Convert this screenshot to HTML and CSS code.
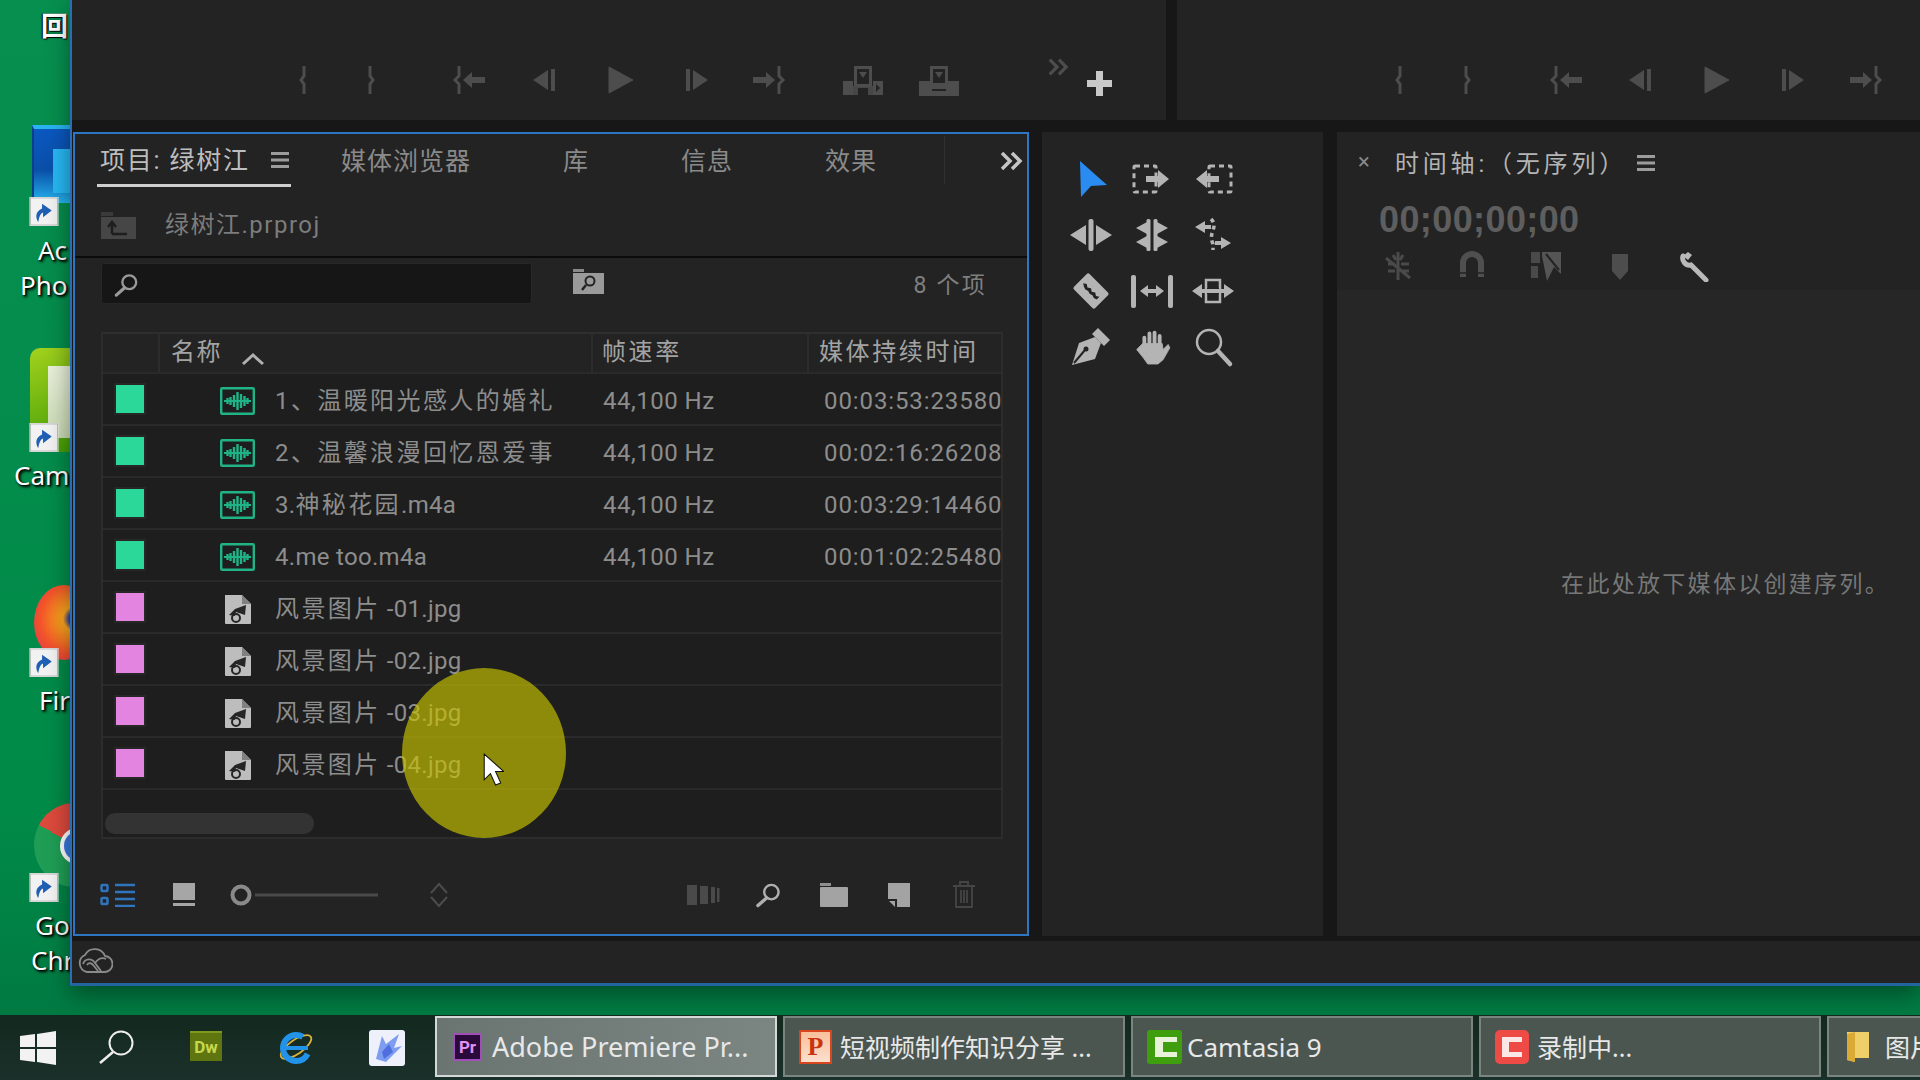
FILE: index.html
```html
<!DOCTYPE html>
<html lang="zh-CN">
<head>
<meta charset="utf-8">
<title>Adobe Premiere Pro</title>
<link rel="stylesheet" href="styles.css">
</head>
<body>
<svg class="defs" aria-hidden="true">
  <symbol id="m-in" viewBox="0 0 40 40"><path d="M21 6V16L18 20L21 24V34" fill="none" stroke="currentColor" stroke-width="3"/></symbol>
  <symbol id="m-out" viewBox="0 0 40 40"><path d="M19 6V16L22 20L19 24V34" fill="none" stroke="currentColor" stroke-width="3"/></symbol>
  <symbol id="m-goin" viewBox="0 0 40 40"><path d="M9 6V16L5 20L9 24V34" fill="none" stroke="currentColor" stroke-width="3"/><path d="M13 20l9-8v5h13v6H22v5z" fill="currentColor"/></symbol>
  <symbol id="m-goout" viewBox="0 0 40 40"><path d="M31 6V16L35 20L31 24V34" fill="none" stroke="currentColor" stroke-width="3"/><path d="M27 20l-9-8v5H5v6h13v5z" fill="currentColor"/></symbol>
  <symbol id="m-back" viewBox="0 0 40 40"><path d="M7 20L22 10V30Z" fill="currentColor"/><rect x="25" y="9" width="4" height="22" fill="currentColor"/></symbol>
  <symbol id="m-fwd" viewBox="0 0 40 40"><path d="M33 20L18 10V30Z" fill="currentColor"/><rect x="11" y="9" width="4" height="22" fill="currentColor"/></symbol>
  <symbol id="m-play" viewBox="0 0 40 40"><path d="M9 7L33 20L9 33Z" fill="currentColor" stroke="currentColor" stroke-width="1" stroke-linejoin="round"/></symbol>
  <symbol id="m-lift" viewBox="0 0 40 40"><path d="M0 21H10V35H0ZM30 21H40V35H30Z" fill="currentColor"/><path d="M10 26h20v9H25V28H15v7H10z" fill="currentColor" opacity=".85"/><rect x="12.500" y="7.500" width="15" height="18" fill="none" stroke="currentColor" stroke-width="3"/><path d="M16 12h8l-4 6z" fill="currentColor"/><path d="M33 24l4 4-4 4z" fill="#232323"/></symbol>
  <symbol id="m-extract" viewBox="0 0 40 40"><path d="M0 21H12V25H28V21H40V36H0Z" fill="currentColor"/><rect x="13" y="29" width="14" height="2" fill="#232323"/><rect x="12.500" y="7.500" width="15" height="17" fill="none" stroke="currentColor" stroke-width="3"/><path d="M16 12h8l-4 6z" fill="currentColor"/></symbol>
  <symbol id="menu" viewBox="0 0 18 18"><path d="M0 2.500H18M0 9H18M0 15.500H18" stroke="currentColor" stroke-width="3"/></symbol>
  <symbol id="chev" viewBox="0 0 24 24"><path d="M3 4l8 8-8 8M13 4l8 8-8 8" fill="none" stroke="currentColor" stroke-width="3.500"/></symbol>
  <symbol id="lens" viewBox="0 0 26 26"><circle cx="16" cy="10" r="7.500" fill="none" stroke="currentColor" stroke-width="2.500"/><path d="M11 16L2 24" stroke="currentColor" stroke-width="3.500" stroke-linecap="round"/></symbol>
  <symbol id="wave" viewBox="0 0 35 28"><rect x="1.200" y="1.200" width="32.600" height="25.600" rx="1" fill="none" stroke="currentColor" stroke-width="2.400"/><path d="M4 14H31" stroke="currentColor" stroke-width="2"/><path d="M7.500 11v6M10.500 10v8M14 8v12M17.500 5v18M21 7v14M24.500 9v10M27.500 11v6" stroke="currentColor" stroke-width="2.400"/></symbol>
  <symbol id="pic" viewBox="0 0 28 32"><path d="M1 2H18L27 11V30a1 1 0 0 1-1 1H2a1 1 0 0 1-1-1z" fill="#bdbdbd"/><path d="M18 2v9h9" fill="#808080"/><path d="M22 12L11 16 5 22l6 1 1-4 9 3z" fill="#262626"/><circle cx="12" cy="25" r="4" fill="none" stroke="#262626" stroke-width="2"/></symbol>
  <symbol id="t-fwd" viewBox="0 0 48 48"><rect x="6" y="11" width="22" height="26" rx="1" fill="none" stroke="currentColor" stroke-width="3" stroke-dasharray="5 4"/><path d="M18 21h12v-6l11 9-11 9v-6H18z" fill="currentColor"/></symbol>
  <symbol id="t-back" viewBox="0 0 48 48"><rect x="20" y="11" width="22" height="26" rx="1" fill="none" stroke="currentColor" stroke-width="3" stroke-dasharray="5 4"/><path d="M30 21H18v-6L7 24l11 9v-6h12z" fill="currentColor"/></symbol>
  <symbol id="t-ripple" viewBox="0 0 48 48"><path d="M3 24l16-10v20zM45 24L29 14v20z" fill="currentColor"/><rect x="21.500" y="8" width="5" height="32" rx="2" fill="currentColor"/></symbol>
  <symbol id="t-roll" viewBox="0 0 48 48"><path d="M8 17l11-6v12zM40 17l-11-6v12zM8 31l11-6v12zM40 31l-11-6v12z" fill="currentColor"/><rect x="18.500" y="8" width="4" height="32" rx="1.500" fill="currentColor"/><rect x="25.500" y="8" width="4" height="32" rx="1.500" fill="currentColor"/></symbol>
  <symbol id="t-rate" viewBox="0 0 48 48"><path d="M6 16l10-6v4h6v4h-6v4zM42 32l-10-6v4h-6v4h6v4z" fill="currentColor"/><path d="M22 8c3 3 4 6 2 11s-2 10 0 14v6" fill="none" stroke="currentColor" stroke-width="3.500" stroke-dasharray="4 3.500"/></symbol>
  <symbol id="t-razor" viewBox="0 0 48 48"><g transform="rotate(45 24 24)"><rect x="9" y="13" width="30" height="22" rx="2" fill="currentColor"/><path d="M13 24l3-2 3 2 3-2 3 2 3-2 3 2 3-2 0 4-3 1-3-1-3 1-3-1-3 1-3-1z" fill="#232323"/></g></symbol>
  <symbol id="t-slip" viewBox="0 0 48 48"><rect x="3" y="8" width="5" height="33" rx="2" fill="currentColor"/><rect x="40" y="8" width="5" height="33" rx="2" fill="currentColor"/><path d="M12 24l8-6v4h8v-4l8 6-8 6v-4h-8v4z" fill="currentColor"/></symbol>
  <symbol id="t-slide" viewBox="0 0 48 48"><path d="M3 24l10-7v5h22v-5l10 7-10 7v-5H13v5z" fill="currentColor"/><rect x="17" y="13" width="14" height="22" fill="none" stroke="currentColor" stroke-width="2.500"/><rect x="18" y="21" width="12" height="6" fill="#232323"/><rect x="17" y="22" width="14" height="4" fill="currentColor"/></symbol>
  <symbol id="t-pen" viewBox="0 0 48 48"><path d="M5 42L12 20 28 14 34 20 28 36z" fill="currentColor"/><path d="M31 5l12 12-6 6-12-12z" fill="currentColor"/><path d="M7 40L18 27" stroke="#232323" stroke-width="2"/><circle cx="19" cy="26" r="2.500" fill="#232323"/></symbol>
  <symbol id="t-hand" viewBox="0 0 48 48"><g transform="translate(3.600 3.600) scale(.85)"><path d="M15 22V13M21 20V8M27 20V7M33 22V11" stroke="currentColor" stroke-width="4.500" stroke-linecap="round"/><path d="M13 20H36L37 27 43 21 45 25 37 39 31 44H19L14 37 6 27 9 24z" fill="currentColor" stroke="currentColor" stroke-linejoin="round"/></g></symbol>
  <symbol id="t-zoom" viewBox="0 0 48 48"><circle cx="20" cy="19" r="12" fill="none" stroke="currentColor" stroke-width="2.500"/><path d="M29 28L41 41" stroke="currentColor" stroke-width="4.500" stroke-linecap="round"/></symbol>
  <symbol id="shortcut" viewBox="0 0 30 30"><rect width="30" height="30" fill="#f2f2f2"/><rect x="1" y="1" width="28" height="28" fill="none" stroke="#bbb"/><path d="M9 26c-3-5-3-11 4-14V7l10 7-9 7v-5c-3 1-4 5-5 10z" fill="#1f5fb4"/></symbol>
</svg>

<main class="desktop">
  <div class="desk-sel">回</div>

  <div class="desk-icon app-ps"><span class="ps-letter"></span></div>
  <svg class="shortcut sc-1"><use href="#shortcut"/></svg>
  <div class="desk-label lab-ac">Ac</div>
  <div class="desk-label lab-pho">Pho</div>

  <div class="desk-icon app-cam"><span class="cam-bar"></span></div>
  <svg class="shortcut sc-2"><use href="#shortcut"/></svg>
  <div class="desk-label lab-cam">Cam</div>

  <div class="desk-icon app-fx"></div>
  <svg class="shortcut sc-3"><use href="#shortcut"/></svg>
  <div class="desk-label lab-fir">Fir</div>

  <div class="desk-icon app-ch"><span class="ch-core"></span></div>
  <svg class="shortcut sc-4"><use href="#shortcut"/></svg>
  <div class="desk-label lab-go">Go</div>
  <div class="desk-label lab-chr">Chr</div>

  <section class="window">
    <div class="monitors">
      <div class="monitor mon-a">
        <svg class="mi"><use href="#m-in"/></svg>
        <svg class="mi"><use href="#m-out"/></svg>
        <svg class="mi"><use href="#m-goin"/></svg>
        <svg class="mi"><use href="#m-back"/></svg>
        <svg class="mi"><use href="#m-play"/></svg>
        <svg class="mi"><use href="#m-fwd"/></svg>
        <svg class="mi"><use href="#m-goout"/></svg>
        <svg class="mi"><use href="#m-lift"/></svg>
        <svg class="mi"><use href="#m-extract"/></svg>
        <svg class="more"><use href="#chev"/></svg>
        <span class="plus"></span>
      </div>
      <div class="monitor mon-b">
        <svg class="mi"><use href="#m-in"/></svg>
        <svg class="mi"><use href="#m-out"/></svg>
        <svg class="mi"><use href="#m-goin"/></svg>
        <svg class="mi"><use href="#m-back"/></svg>
        <svg class="mi"><use href="#m-play"/></svg>
        <svg class="mi"><use href="#m-fwd"/></svg>
        <svg class="mi"><use href="#m-goout"/></svg>
      </div>
    </div>

    <div class="workspace">
      <section class="project">
        <header class="tabs">
          <div class="tab tab-on"><span>项目: 绿树江</span><svg class="menu"><use href="#menu"/></svg></div>
          <div class="tab">媒体浏览器</div>
          <div class="tab">库</div>
          <div class="tab">信息</div>
          <div class="tab">效果</div>
          <div class="tab-div"></div>
          <svg class="tab-more"><use href="#chev"/></svg>
        </header>
        <div class="crumb">
          <svg class="up" viewBox="0 0 35 27"><path d="M0 0H12V4H0Z" fill="#3a3a3a"/><rect y="5" width="35" height="22" fill="#464646"/><path d="M11 22H26M11 22V12M7 15l4-5 4 5" fill="none" stroke="#1e1e1e" stroke-width="2.500"/></svg>
          <span>绿树江.prproj</span>
        </div>
        <div class="searchrow">
          <div class="search"><svg class="lens"><use href="#lens"/></svg></div>
          <svg class="binsearch" viewBox="0 0 31 25"><path d="M0 0H11V3H0Z" fill="#8a8a8a"/><rect y="4" width="31" height="21" fill="#9a9a9a"/><circle cx="17" cy="12" r="4.500" fill="none" stroke="#232323" stroke-width="2"/><path d="M13 16l-4 5" stroke="#232323" stroke-width="2.500"/></svg>
          <div class="count">8 个项</div>
        </div>
        <div class="table">
          <div class="row head">
            <div></div>
            <div class="c-name"><span>名称</span><svg class="sort" viewBox="0 0 24 14"><path d="M2 12L12 3 22 12" fill="none" stroke="#b0b0b0" stroke-width="3"/></svg></div>
            <div class="c-rate">帧速率</div>
            <div class="c-time">媒体持续时间</div>
          </div>
          <div class="row"><div><span class="sw sw-a"></span></div><div class="c-name"><svg class="wave"><use href="#wave"/></svg><span class="nm"><span class="zh">1、温暖阳光感人的婚礼</span></span></div><div class="c-rate">44,100 Hz</div><div class="c-time">00:03:53:23580</div></div>
          <div class="row"><div><span class="sw sw-a"></span></div><div class="c-name"><svg class="wave"><use href="#wave"/></svg><span class="nm"><span class="zh">2、温馨浪漫回忆恩爱事</span></span></div><div class="c-rate">44,100 Hz</div><div class="c-time">00:02:16:26208</div></div>
          <div class="row"><div><span class="sw sw-a"></span></div><div class="c-name"><svg class="wave"><use href="#wave"/></svg><span class="nm">3.<span class="zh">神秘花园</span>.m4a</span></div><div class="c-rate">44,100 Hz</div><div class="c-time">00:03:29:14460</div></div>
          <div class="row"><div><span class="sw sw-a"></span></div><div class="c-name"><svg class="wave"><use href="#wave"/></svg><span class="nm">4.me too.m4a</span></div><div class="c-rate">44,100 Hz</div><div class="c-time">00:01:02:25480</div></div>
          <div class="row"><div><span class="sw sw-b"></span></div><div class="c-name"><svg class="pic"><use href="#pic"/></svg><span class="nm"><span class="zh">风景图片</span> -01.jpg</span></div><div></div><div></div></div>
          <div class="row"><div><span class="sw sw-b"></span></div><div class="c-name"><svg class="pic"><use href="#pic"/></svg><span class="nm"><span class="zh">风景图片</span> -02.jpg</span></div><div></div><div></div></div>
          <div class="row"><div><span class="sw sw-b"></span></div><div class="c-name"><svg class="pic"><use href="#pic"/></svg><span class="nm"><span class="zh">风景图片</span> -03.jpg</span></div><div></div><div></div></div>
          <div class="row"><div><span class="sw sw-b"></span></div><div class="c-name"><svg class="pic"><use href="#pic"/></svg><span class="nm"><span class="zh">风景图片</span> -04.jpg</span></div><div></div><div></div></div>
          <div class="scroll"><span class="thumb"></span></div>
        </div>
        <footer class="foot">
          <svg class="f-list" viewBox="0 0 35 24"><g fill="none" stroke="#2f74bd" stroke-width="2.500"><rect x="1.500" y="2" width="6" height="6" rx="1"/><rect x="1.500" y="15" width="6" height="6" rx="1"/><path d="M15 2H35M15 9H35M15 16H35M15 23H35"/></g></svg>
          <svg class="f-free" viewBox="0 0 22 24"><rect width="22" height="17" fill="#a6a6a6"/><rect y="20" width="22" height="3" fill="#a6a6a6"/></svg>
          <svg class="f-slider" viewBox="0 0 148 24"><circle cx="11" cy="12" r="8.500" fill="none" stroke="#8a8a8a" stroke-width="4"/><rect x="25" y="10.500" width="123" height="3" fill="#4a4a4a"/></svg>
          <svg class="f-sort" viewBox="0 0 18 26"><path d="M1 11L9 2 17 11M1 15L9 24 17 15" fill="none" stroke="#4c4c4c" stroke-width="2"/></svg>
          <svg class="f-bars" viewBox="0 0 33 22"><rect y="1" width="10" height="20" fill="#4a4a4a"/><rect x="13" y="2" width="8" height="18" fill="#4a4a4a"/><rect x="24" y="3" width="4" height="16" fill="#4a4a4a"/><rect x="30" y="4" width="2.500" height="14" fill="#4a4a4a"/></svg>
          <svg class="f-lens"><use href="#lens"/></svg>
          <svg class="f-folder" viewBox="0 0 28 24"><path d="M0 0H11V3H0Z" fill="#8e8e8e"/><rect y="4" width="28" height="20" rx="1" fill="#a3a3a3"/></svg>
          <svg class="f-new" viewBox="0 0 22 24"><path d="M0 0H22V24H9V16H0Z" fill="#a3a3a3"/><path d="M1 18H7V24Z" fill="#a3a3a3"/></svg>
          <svg class="f-trash" viewBox="0 0 22 27"><g fill="none" stroke="#454545" stroke-width="1.800"><path d="M0 5H22M7 5V1H15V5M3 5V26H19V5M8 9V22M11 9V22M14 9V22"/></g></svg>
        </footer>
      </section>

      <aside class="tools">
        <svg class="tool" viewBox="0 0 48 48"><path d="M13 6L40 30 24 31 14 42Z" fill="#2a8cf0"/></svg>
        <svg class="tool"><use href="#t-fwd"/></svg>
        <svg class="tool"><use href="#t-back"/></svg>
        <svg class="tool"><use href="#t-ripple"/></svg>
        <svg class="tool"><use href="#t-roll"/></svg>
        <svg class="tool"><use href="#t-rate"/></svg>
        <svg class="tool"><use href="#t-razor"/></svg>
        <svg class="tool"><use href="#t-slip"/></svg>
        <svg class="tool"><use href="#t-slide"/></svg>
        <svg class="tool"><use href="#t-pen"/></svg>
        <svg class="tool"><use href="#t-hand"/></svg>
        <svg class="tool"><use href="#t-zoom"/></svg>
      </aside>

      <section class="timeline">
        <div class="tl-head">
          <div class="tl-title"><span class="tl-x">×</span><span class="tl-name">时间轴:（无序列）</span><svg class="menu"><use href="#menu"/></svg></div>
          <div class="tc">00;00;00;00</div>
          <div class="tl-icons">
            <svg class="ti" viewBox="0 0 32 32"><path d="M16 2v28M4 8l24 20M6 14h7M19 14h8M6 21h7M19 21h8M11 5l3 5M21 5l-3 5" stroke="#4a4a4a" stroke-width="3" fill="none"/></svg>
            <svg class="ti" viewBox="0 0 32 32"><path d="M7 27V13a9 9 0 0 1 18 0v14" fill="none" stroke="#4f4f4f" stroke-width="6"/><path d="M4 23h6M22 23h6" stroke="#232323" stroke-width="1.500"/></svg>
            <svg class="ti" viewBox="0 0 32 32"><path d="M1 2H10V13H1ZM1 16H8V28H1Z" fill="#4a4a4a"/><path d="M12 2H31V24L24 17 17 31 12 6Z" fill="#555"/><path d="M16 4L29 20" stroke="#232323" stroke-width="2"/></svg>
            <svg class="ti" viewBox="0 0 32 32"><path d="M8 4H24V21L16 30 8 21Z" fill="#4d4d4d"/></svg>
            <svg class="ti" viewBox="0 0 32 32"><path d="M5 6a7 7 0 0 0 8 9L28 30" fill="none" stroke="#b9b9b9" stroke-width="5" stroke-linecap="round"/><path d="M5 6l5-4 4 3-4 5z" fill="#b9b9b9"/></svg>
          </div>
        </div>
        <div class="tl-body">在此处放下媒体以创建序列。</div>
      </section>
    </div>

    <div class="status">
      <svg class="cc" viewBox="0 0 36 28"><g fill="none" stroke="#8a8a8a" stroke-width="1.800"><path d="M10 26a9 9 0 0 1-2-17 11 11 0 0 1 20 1 8 8 0 0 1-1 16z"/><path d="M6 18c2-6 9-6 12-1l6 8"/><path d="M10 19c2-3 5-2 7 1l4 5M29 13c-4-2-8 0-11 4"/></g></svg>
    </div>

    <div class="spot"></div>
    <svg class="cursor" viewBox="0 0 20 32"><path d="M1 1V26L7 20 12 31 17 29 12 18H20Z" fill="#fff" stroke="#111" stroke-width="1"/></svg>
  </section>
</main>

<nav class="taskbar">
  <svg class="tb-win" viewBox="0 0 36 34"><path d="M0 5L15 3V16H0ZM17 3L36 0V16H17ZM0 18H15V31L0 29ZM17 18H36V34L17 31Z" fill="#f2f2f2"/></svg>
  <svg class="tb-search" viewBox="0 0 37 34"><circle cx="23" cy="13" r="11.500" fill="none" stroke="#eee" stroke-width="2"/><path d="M15 22L2 33" stroke="#eee" stroke-width="2.500"/></svg>
  <div class="tb-dw">Dw</div>
  <svg class="tb-ie" viewBox="0 0 36 34"><ellipse cx="18" cy="17" rx="18" ry="7" transform="rotate(-35 18 17)" fill="none" stroke="#d8b340" stroke-width="1.800"/><circle cx="18" cy="18" r="13" fill="none" stroke="#2293e8" stroke-width="6" stroke-dasharray="62 20" stroke-dashoffset="-6"/><rect x="8" y="16" width="22" height="4" fill="#2293e8"/></svg>
  <div class="tb-app"><svg viewBox="0 0 36 36"><path d="M7 29L13 6 17 14 30 4 25 18 33 16 17 32Z" fill="#7e9cf0"/><path d="M13 22L20 14 24 22 15 29Z" fill="#4f6fe0"/></svg></div>
  <div class="task task-on">
    <span class="ti-pr">Pr</span><span class="task-text">Adobe Premiere Pr...</span>
  </div>
  <div class="task">
    <span class="ti-ppt">P</span><span class="task-text task-zh">短视频制作知识分享 ...</span>
  </div>
  <div class="task task-cam">
    <span class="ti-cam"></span><span class="task-text task-lat">Camtasia 9</span>
  </div>
  <div class="task">
    <span class="ti-rec"></span><span class="task-text task-zh">录制中...</span>
  </div>
  <div class="task">
    <svg class="ti-folder" viewBox="0 0 22 30"><path d="M0 0H22V26H8V30L0 28Z" fill="#f0cf6a"/><path d="M0 2L8 0V30L0 28Z" fill="#d9ab35"/></svg><span class="task-text task-zh">图片</span>
  </div>
</nav>
</body>
</html>
```

FILE: styles.css
```css
* { box-sizing: border-box; }
html, body { margin: 0; height: 100%; overflow: hidden; }
body {
  width: 1920px; height: 1080px;
  display: flex; flex-direction: column;
  font-family: Roboto, "Noto Sans CJK SC", sans-serif;
  background: #0a8a4c;
}
svg { display: block; flex: none; }
.defs { position: absolute; width: 0; height: 0; }

/* desktop */
.desktop {
  position: relative; flex: 0 0 1015px; overflow: hidden;
  background: linear-gradient(180deg, #078f4f 0, #008a48 80%, #007a42 100%);
}
.desk-sel {
  position: absolute; left: 41px; top: 9px;
  color: #fff; font: 700 27px/32px "Noto Sans CJK SC", sans-serif;
  text-shadow: 1px 1px 1px #000, -1px 0 1px #000;
}
.desk-label {
  position: absolute; color: #fff; white-space: nowrap;
  font: 26px/32px "Noto Sans", sans-serif;
  text-shadow: 1px 1px 2px #000, 2px 2px 3px #000;
}
.lab-ac { left: 38px; top: 234px; }
.lab-pho { left: 20px; top: 269px; }
.lab-cam { left: 14px; top: 459px; }
.lab-fir { left: 39px; top: 684px; }
.lab-go { left: 35px; top: 909px; }
.lab-chr { left: 31px; top: 944px; }
.desk-icon { position: absolute; overflow: hidden; }
.app-ps {
  left: 32px; top: 125px; width: 50px; height: 78px;
  background: linear-gradient(180deg, #0a58c0, #0a4fa8 55%, #25b5ee 100%);
  border-top: 4px solid #29b4f0; border-left: 2px solid #0a3f8c;
}
.ps-letter { position: absolute; left: 19px; top: 20px; width: 30px; height: 44px; background: #27b7f3; }
.app-cam {
  left: 30px; top: 348px; width: 50px; height: 104px; border-radius: 10px 0 0 10px;
  background: linear-gradient(160deg, #a3d21e, #3f9a05);
}
.cam-bar { position: absolute; left: 18px; top: 18px; width: 30px; height: 72px; background: linear-gradient(180deg, #e9f0da, #c8d9b2); }
.app-fx {
  left: 34px; top: 585px; width: 60px; height: 75px; border-radius: 50%;
  background: radial-gradient(circle at 70% 45%, #3a3f9c 0 12%, #f9a61a 22%, #f2552a 60%, #e0245e 100%);
}
.app-ch {
  left: 34px; top: 803px; width: 80px; height: 84px; border-radius: 50%;
  background: conic-gradient(from 300deg, #dc4a3c 0 120deg, #f6c842 120deg 180deg, #1f9d55 180deg 360deg);
}
.ch-core { position: absolute; left: 26px; top: 25px; width: 34px; height: 36px; border-radius: 50%; background: #3a78e0; border: 4px solid #fff; }
.shortcut { position: absolute; left: 29px; width: 30px; height: 29px; }
.sc-1 { top: 197px; }
.sc-2 { top: 423px; }
.sc-3 { top: 648px; }
.sc-4 { top: 873px; }

/* application window */
.window {
  position: absolute; left: 70px; top: 0; width: 1850px; height: 986px;
  background: #171717;
  border-left: 2px solid #2a6db5; border-bottom: 3px solid #23649f;
  box-shadow: 0 8px 22px rgba(0, 0, 0, .4);
  display: flex; flex-direction: column;
}
.monitors { display: flex; height: 120px; gap: 11px; flex: none; }
.monitor { background: #232323; display: flex; align-items: center; padding-top: 40px; color: #4d4d4d; }
.mon-a { width: 1094px; padding-left: 211px; }
.mon-b { flex: 1; padding-left: 202px; }
.mi { width: 40px; height: 40px; }
.mon-a .mi:nth-child(2) { margin-left: 28px; }
.mon-a .mi:nth-child(3) { margin-left: 59px; }
.mon-a .mi:nth-child(4) { margin-left: 36px; }
.mon-a .mi:nth-child(5) { margin-left: 34px; }
.mon-a .mi:nth-child(6) { margin-left: 35px; }
.mon-a .mi:nth-child(7) { margin-left: 33px; }
.mon-a .mi:nth-child(8) { margin-left: 55px; }
.mon-a .mi:nth-child(9) { margin-left: 36px; }
.mon-b .mi:nth-child(2) { margin-left: 28px; }
.mon-b .mi:nth-child(3) { margin-left: 60px; }
.mon-b .mi:nth-child(4) { margin-left: 35px; }
.mon-b .mi:nth-child(5) { margin-left: 34px; }
.mon-b .mi:nth-child(6) { margin-left: 35px; }
.mon-b .mi:nth-child(7) { margin-left: 34px; }
.more { width: 22px; height: 22px; margin: 0 0 26px 88px; color: #4d4d4d; }
.plus {
  width: 25px; height: 25px; margin: 6px 0 0 18px; border-radius: 2px;
  background: linear-gradient(#c8c8c8, #c8c8c8) center/100% 7px no-repeat, linear-gradient(#c8c8c8, #c8c8c8) center/7px 100% no-repeat;
}

.workspace { display: flex; height: 816px; padding-top: 12px; flex: none; }

/* project panel */
.project {
  margin-left: 1px; width: 956px; height: 804px;
  background: #232323; border: 2px solid #2d76c4;
  display: flex; flex-direction: column;
}
.tabs { position: relative; flex: 0 0 53px; display: flex; align-items: stretch; color: #8a8a8a; font-size: 25px; letter-spacing: 1px; }
.tab { display: flex; align-items: center; height: 50px; margin-left: 92px; white-space: nowrap; }
.tab:nth-child(2) { margin-left: 50px; }
.tab-on {
  margin-left: 22px; width: 194px; height: 53px; padding: 0 0 3px 3px;
  justify-content: space-between; border-bottom: 3px solid #cfcfcf; color: #bdbdbd; letter-spacing: 1.800px;
}
.menu { width: 18px; height: 18px; color: #9c9c9c; margin: 4px 2px 0 0; }
.tab-div { position: absolute; left: 869px; top: 2px; width: 1px; height: 48px; background: #303030; }
.tab-more { position: absolute; left: 924px; top: 15px; width: 24px; height: 24px; color: #c4c4c4; }
.crumb {
  flex: 0 0 71px; display: flex; align-items: center; gap: 29px; padding: 2px 0 0 26px;
  border-bottom: 2px solid #0b0b0b; color: #7c7c7c; font-size: 24px;
}
.up { width: 35px; height: 27px; margin-top: 5px; }
.crumb span { letter-spacing: 1.500px; }
.searchrow { display: flex; align-items: center; margin: 5px 24px 0 26px; height: 41px; flex: none; }
.search { width: 431px; height: 41px; padding: 9px 0 0 12px; background: #161616; border: 1px solid #272727; border-radius: 3px; }
.lens { width: 25px; height: 24px; color: #9a9a9a; }
.binsearch { width: 31px; height: 25px; margin: -4px 0 0 41px; }
.count { margin-left: auto; padding: 0 16px 2px 0; color: #7f7f7f; font-size: 23px; letter-spacing: 2.200px; }

.table {
  margin: 28px 24px 0 26px; height: 507px; flex: none;
  background: #1e1e1e; border: 2px solid #2c2c2c; border-top-color: #2e2e2e;
  display: flex; flex-direction: column; overflow: hidden;
}
.row {
  flex: 0 0 52px; display: grid; grid-template-columns: 55px 433px 216px 1fr; align-items: center;
  border-bottom: 2px solid #2a2a2a; color: #8d8d8d; font-size: 24px; line-height: 30px; white-space: nowrap;
}
.head { flex-basis: 40px; background: #232323; color: #a3a3a3; font-size: 24px; letter-spacing: 2.600px; }
.head > div { height: 100%; display: flex; align-items: center; padding-bottom: 3px; border-left: 2px solid #2c2c2c; }
.head > div:first-child { border-left: 0; }
.c-name { display: flex; align-items: center; padding-left: 62px; }
.nm { letter-spacing: .3px; padding-top: 4px; }
.zh { letter-spacing: 2.400px; }
.c-rate { padding: 3px 0 0 12px; letter-spacing: .5px; }
.c-time { padding: 3px 0 0 17px; letter-spacing: .9px; overflow: hidden; }
.head .c-name { padding-left: 11px; gap: 19px; }
.head .c-name span { letter-spacing: 1.500px; }
.head .c-rate { padding: 0 0 3px 9px; letter-spacing: 2.600px; }
.head .c-time { padding: 0 0 3px 10px; letter-spacing: 2.600px; }
.sort { width: 24px; height: 14px; margin-top: 14px; }
.sw { display: block; margin-left: 13px; width: 28px; height: 28px; box-shadow: 0 0 0 2px #272727; }
.sw-a { background: #2bd89a; }
.sw-b { background: #e384e0; }
.wave { width: 35px; height: 28px; margin: 3px 20px 0 0; color: #1fb385; }
.pic { width: 28px; height: 32px; margin: 3px 23px 0 4px; }
.scroll { flex: 1; padding: 23px 0 0 2px; }
.thumb { display: block; width: 209px; height: 21px; border-radius: 10px; background: #333; }

.foot { flex: 1; display: flex; align-items: center; padding: 16px 0 0 25px; }
.f-list { width: 35px; height: 24px; }
.f-free { width: 22px; height: 24px; margin-left: 38px; }
.f-slider { width: 148px; height: 24px; margin-left: 35px; }
.f-sort { width: 18px; height: 26px; margin-left: 52px; }
.f-bars { width: 33px; height: 22px; margin-left: 239px; }
.f-lens { width: 25px; height: 26px; margin-left: 36px; color: #b0b0b0; }
.f-folder { width: 28px; height: 24px; margin-left: 39px; }
.f-new { width: 22px; height: 24px; margin-left: 40px; }
.f-trash { width: 22px; height: 27px; margin-left: 43px; }

/* tools */
.tools {
  margin-left: 13px; width: 281px; height: 804px; background: #232323;
  display: grid; grid-template-columns: repeat(3, 61px); grid-auto-rows: 56px;
  align-content: start; padding: 25px 0 0 25px;
}
.tool { width: 48px; height: 48px; color: #b4b4b4; margin-top: -2px; }

/* timeline */
.timeline { margin-left: 14px; flex: 1; height: 804px; display: flex; flex-direction: column; background: #262626; }
.tl-head { flex: 0 0 158px; background: #232323; }
.tl-title { display: flex; align-items: center; height: 58px; padding-left: 21px; color: #b4b4b4; font-size: 24px; letter-spacing: 3.800px; }
.tl-x { width: 37px; font-size: 22px; color: #8a8a8a; }
.tl-name { width: 242px; white-space: nowrap; }
.tc { margin: 10px 0 0 42px; color: #5e5e5e; font: 700 36px/40px "Liberation Sans", sans-serif; letter-spacing: .4px; }
.tl-icons { display: flex; gap: 42px; margin: 10px 0 0 45px; }
.ti { width: 32px; height: 32px; }
.tl-body {
  flex: 1; display: flex; align-items: center; justify-content: flex-end;
  padding: 0 30px 62px 0; color: #777; font-size: 23px; letter-spacing: 2.300px;
}

.status { flex: 1; margin-top: 5px; background: #232323; padding: 5px 0 0 5px; }
.cc { width: 36px; height: 28px; }

.spot {
  position: absolute; left: 330px; top: 668px; width: 164px; height: 170px; border-radius: 50%;
  background: rgba(200, 195, 0, .66);
}
.cursor { position: absolute; left: 411px; top: 753px; width: 21px; height: 33px; }

/* taskbar */
.taskbar {
  flex: 1; display: flex; align-items: flex-start; position: relative;
  background: linear-gradient(180deg, #13291f, #1a302a); padding-top: 1px;
}
.tb-win { width: 36px; height: 34px; margin: 15px 0 0 20px; }
.tb-search { width: 37px; height: 34px; margin: 14px 0 0 42px; }
.tb-dw {
  flex: none; width: 32px; height: 30px; margin: 15px 0 0 55px; text-align: center;
  background: #5f7610; color: #c8d84e; font: 700 17px/28px Roboto, sans-serif; border-top: 2px solid #7d9a1c;
}
.tb-ie { width: 36px; height: 34px; margin: 14px 0 0 56px; }
.tb-app { flex: none; width: 36px; height: 36px; margin: 14px 0 0 55px; background: #eef0fb; border-radius: 3px; }
.tb-app svg { width: 36px; height: 36px; }
.task {
  flex: none; width: 342px; height: 61px; margin-left: 6px; padding-left: 14px;
  display: flex; align-items: center; gap: 8px; overflow: hidden;
  background: #4b5651; border: 2px solid #7a8580; color: #e8e8e8;
}
.tb-app + .task { margin-left: 30px; }
.task-on { background: linear-gradient(90deg, #6a7572, #7b8582); border-color: #d4d8d6; padding-left: 16px; gap: 10px; }
.task-cam { gap: 5px; }
.task-text { font: 27px/32px "Noto Sans", "Noto Sans CJK SC", sans-serif; white-space: nowrap; }
.task-zh { font-size: 25px; }
.task-lat { font-size: 26px; }
.ti-pr {
  width: 29px; height: 28px; flex: none; background: #2a0a3a; border: 2px solid #a04fb8; color: #e292f5;
  font: 700 17px/24px Roboto, sans-serif; text-align: center;
}
.ti-ppt {
  width: 33px; height: 34px; flex: none; background: linear-gradient(#f9c09a, #fbe0cf); border: 2px solid #d9451e; color: #c8350f;
  font: 700 26px/30px "Liberation Serif", serif; text-align: center;
}
.ti-cam {
  width: 35px; height: 34px; flex: none; position: relative; border-radius: 3px;
  background: linear-gradient(#e8f2d8, #e8f2d8) 8px 7px/8px 20px no-repeat, linear-gradient(#e8f2d8, #e8f2d8) 8px 7px/22px 5px no-repeat, linear-gradient(#e8f2d8, #e8f2d8) 8px 22px/22px 5px no-repeat, #3f9e0e;
}
.ti-rec {
  width: 34px; height: 34px; flex: none; border-radius: 5px;
  background: linear-gradient(#fbe8e6, #fbe8e6) 7px 7px/7px 20px no-repeat, linear-gradient(#fbe8e6, #fbe8e6) 7px 7px/20px 5px no-repeat, linear-gradient(#fbe8e6, #fbe8e6) 7px 22px/20px 5px no-repeat, #ee4b46;
}
.ti-folder { width: 22px; height: 30px; margin-right: 8px; margin-left: 4px; }
```
